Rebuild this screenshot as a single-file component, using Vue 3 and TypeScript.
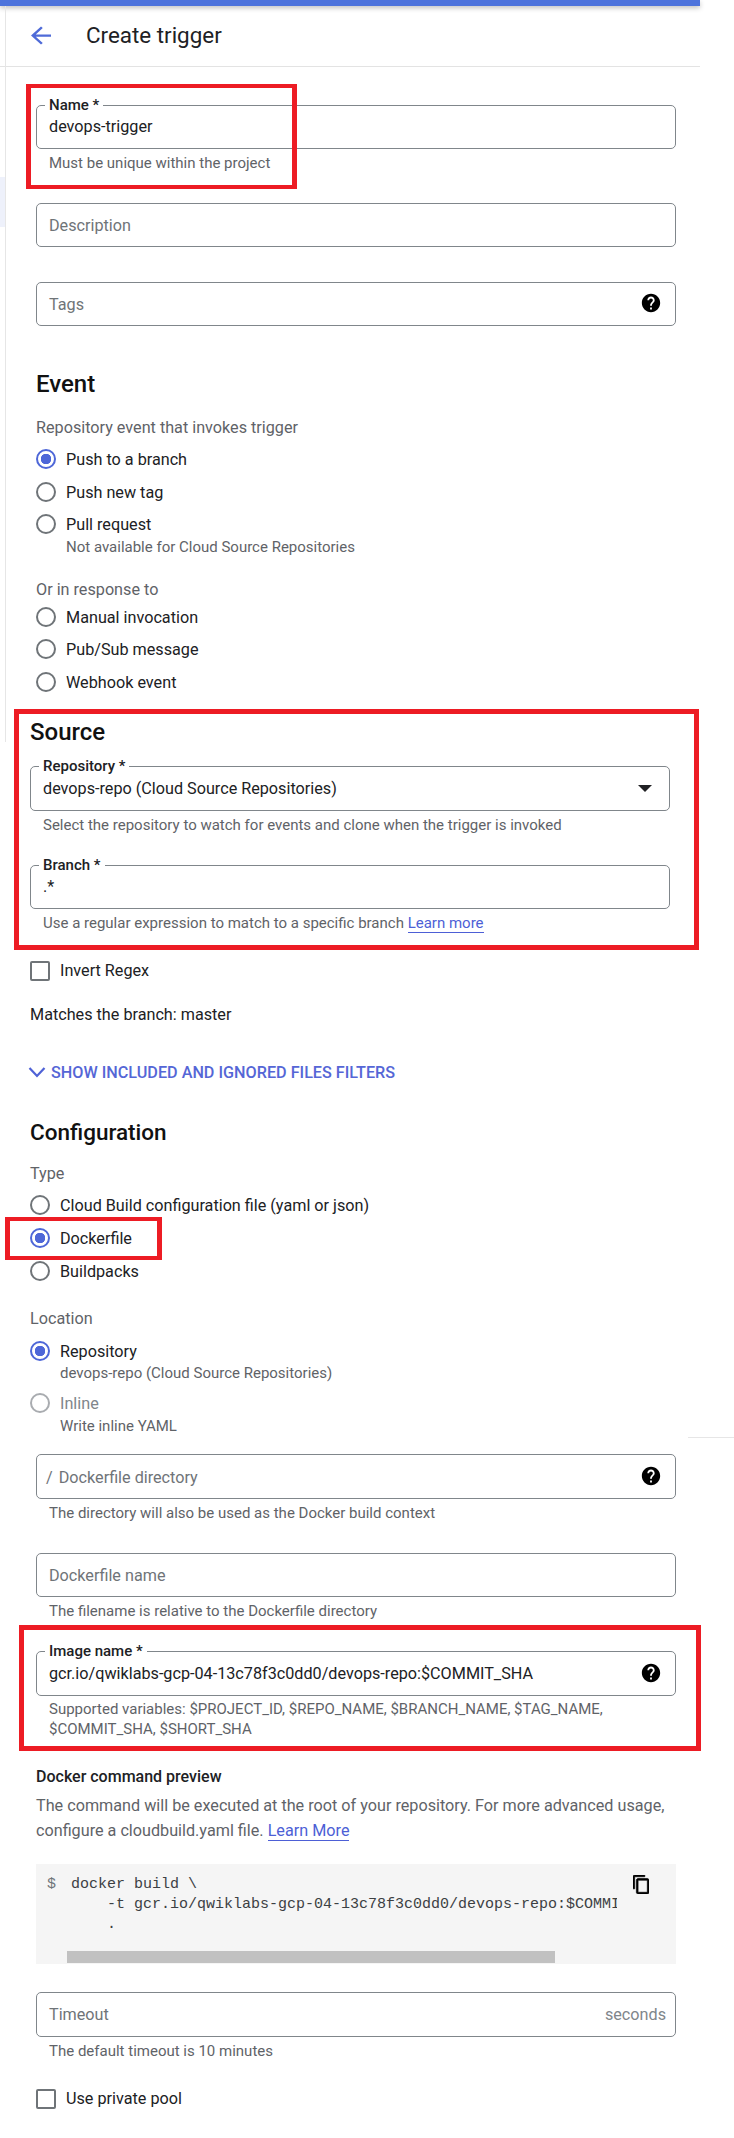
<script setup lang="ts">
const helpPath = 'M12 2C6.48 2 2 6.48 2 12s4.48 10 10 10 10-4.48 10-10S17.52 2 12 2zm1 17h-2v-2h2v2zm2.07-7.75l-.9.92C13.45 12.9 13 13.5 13 15h-2v-.5c0-1.1.45-2.1 1.17-2.83l1.24-1.26c.37-.36.59-.86.59-1.41 0-1.1-.9-2-2-2s-2 .9-2 2H8c0-2.21 1.79-4 4-4s4 1.79 4 4c0 .88-.36 1.68-.93 2.25z'
</script>

<template>
  <div class="root">
    <div class="topbar"></div>
    <div class="rail"></div>
    <div class="rail-tint"></div>
    <div class="stray-line"></div>

    <header class="header">
      <svg class="back" viewBox="0 0 24 24" width="30" height="27" preserveAspectRatio="none"><path fill="#4f6bd8" d="M20 11H7.83l5.59-5.59L12 4l-8 8 8 8 1.41-1.41L7.83 13H20v-2z"/></svg>
      <h1>Create trigger</h1>
    </header>

    <form class="form" @submit.prevent>
      <div class="field m38">
        <span class="legend">Name *</span>
        <span class="value">devops-trigger</span>
      </div>
      <p class="helper">Must be unique within the project</p>

      <div class="field m30"><span class="placeholder">Description</span></div>
      <div class="field m35">
        <span class="placeholder">Tags</span>
        <svg class="help" viewBox="0 0 24 24"><path :d="helpPath"/></svg>
      </div>

      <h2 class="m43">Event</h2>
      <p class="group-label m18">Repository event that invokes trigger</p>
      <div class="option m10"><span class="radio on"></span>Push to a branch</div>
      <div class="option m9"><span class="radio"></span>Push new tag</div>
      <div class="option m8"><span class="radio"></span>Pull request</div>
      <p class="sub m1">Not available for Cloud Source Repositories</p>
      <p class="group-label m22">Or in response to</p>
      <div class="option m6"><span class="radio"></span>Manual invocation</div>
      <div class="option m8"><span class="radio"></span>Pub/Sub message</div>
      <div class="option m9"><span class="radio"></span>Webhook event</div>

      <div class="shifted">
        <h2 class="m23">Source</h2>
        <div class="field tall m19">
          <span class="legend">Repository *</span>
          <span class="value">devops-repo (Cloud Source Repositories)</span>
          <span class="caret"></span>
        </div>
        <p class="helper">Select the repository to watch for events and clone when the trigger is invoked</p>
        <div class="field m30">
          <span class="legend">Branch *</span>
          <span class="value">.*</span>
        </div>
        <p class="helper">Use a regular expression to match to a specific branch <a class="link">Learn more</a></p>

        <div class="option m26"><span class="check"></span>Invert Regex</div>
        <p class="plain m22">Matches the branch: master</p>
        <div class="toggle m35">
          <svg viewBox="0 0 18 12" width="18" height="12"><path d="M1.5 2 9 10l7.5-8" fill="none" stroke="#4f62d6" stroke-width="2.2"/></svg>
          SHOW INCLUDED AND IGNORED FILES FILTERS
        </div>

        <h2 class="config m33">Configuration</h2>
        <p class="group-label m16">Type</p>
        <div class="option m10"><span class="radio"></span>Cloud Build configuration file (yaml or json)</div>
        <div class="option m9"><span class="radio on"></span>Dockerfile</div>
        <div class="option m9"><span class="radio"></span>Buildpacks</div>
        <p class="group-label m25">Location</p>
        <div class="option m11"><span class="radio on"></span>Repository</div>
        <p class="sub">devops-repo (Cloud Source Repositories)</p>
        <div class="option disabled m8"><span class="radio"></span>Inline</div>
        <p class="sub m1">Write inline YAML</p>
      </div>

      <div class="field tall m18">
        <span class="placeholder"><span class="slash">/</span>Dockerfile directory</span>
        <svg class="help" viewBox="0 0 24 24"><path :d="helpPath"/></svg>
      </div>
      <p class="helper">The directory will also be used as the Docker build context</p>
      <div class="field m30"><span class="placeholder">Dockerfile name</span></div>
      <p class="helper">The filename is relative to the Dockerfile directory</p>
      <div class="field tall m30">
        <span class="legend">Image name *</span>
        <span class="value">gcr.io/qwiklabs-gcp-04-13c78f3c0dd0/devops-repo:$COMMIT_SHA</span>
        <svg class="help" viewBox="0 0 24 24"><path :d="helpPath"/></svg>
      </div>
      <p class="helper tight">Supported variables: $PROJECT_ID, $REPO_NAME, $BRANCH_NAME, $TAG_NAME,<br>$COMMIT_SHA, $SHORT_SHA</p>

      <h3 class="m28">Docker command preview</h3>
      <p class="para">The command will be executed at the root of your repository. For more advanced usage, configure a cloudbuild.yaml file. <a class="link">Learn More</a></p>

      <div class="code">
        <span class="prompt">$</span>
        <pre class="cmd">docker build \
    -t gcr.io/qwiklabs-gcp-04-13c78f3c0dd0/devops-repo:$COMMIT_SHA
    .</pre>
        <svg class="copy" viewBox="2 1 19 22" width="16" height="19" preserveAspectRatio="none"><path stroke="#000" stroke-width="0.8" d="M16 1H4c-1.1 0-2 .9-2 2v14h2V3h12V1zm3 4H8c-1.1 0-2 .9-2 2v14c0 1.1.9 2 2 2h11c1.1 0 2-.9 2-2V7c0-1.1-.9-2-2-2zm0 16H8V7h11v14z"/></svg>
        <div class="scrollbar"></div>
      </div>

      <div class="field tall m28">
        <span class="placeholder timeout">Timeout</span>
        <span class="suffix">seconds</span>
      </div>
      <p class="helper">The default timeout is 10 minutes</p>
      <div class="option m26"><span class="check"></span>Use private pool</div>
    </form>

    <div class="mark mark-name"></div>
    <div class="mark mark-source"></div>
    <div class="mark mark-docker"></div>
    <div class="mark mark-image"></div>
  </div>
</template>

<style>
html, body { margin: 0; background: #fff; }
</style>

<style scoped>
* { box-sizing: border-box; }
.root {
  position: relative;
  width: 734px;
  height: 2138px;
  overflow: hidden;
  background: #fff;
  color: #202124;
  font-family: Roboto, "Liberation Sans", sans-serif;
  font-size: 16.2px;
}
.topbar {
  height: 6px;
  width: 700px;
  background: #4d73dc;
  box-shadow: 0 2px 5px rgba(0, 0, 0, 0.25);
}
.rail { position: absolute; left: 5px; top: 6px; width: 1px; height: 736px; background: #e6e6e6; }
.rail-tint { position: absolute; left: 0; top: 177px; width: 5px; height: 50px; background: #eef1fb; }
.stray-line { position: absolute; left: 688px; top: 1437px; width: 46px; height: 1px; background: #e6e6e6; }
.header {
  display: flex;
  align-items: center;
  width: 700px;
  height: 61px;
  border-bottom: 1px solid #e3e3e3;
  padding-bottom: 2px;
}
.back { margin-left: 26px; }
h1 { margin: 0 0 0 30px; font-size: 22.4px; font-weight: 400; line-height: 30px; color: #202124; }
.form { padding-left: 36px; width: 676px; }
.shifted { margin-left: -6px; }
h2 { margin-bottom: 0; font-size: 24px; font-weight: 500; line-height: 30px; color: #111; }
h2.config { font-size: 22.5px; }
h3 { margin-bottom: 0; font-size: 16px; font-weight: 500; line-height: 20px; color: #202124; }
p { margin: 0; }
.field {
  position: relative;
  display: flex;
  align-items: center;
  width: 640px;
  height: 44px;
  padding: 0 12px;
  border: 1px solid #80868b;
  border-radius: 5px;
  background: #fff;
}
.field.tall { height: 45px; }
.legend {
  position: absolute;
  left: 8px;
  top: -9px;
  padding: 0 4px;
  background: #fff;
  font-size: 15px;
  font-weight: 500;
  line-height: 16px;
}
.value { line-height: 20px; }
.placeholder { padding-top: 2px; color: #6f7478; line-height: 20px; }
.placeholder.timeout { padding-top: 0; }
.slash { margin-right: 6px; margin-left: -3px; }
.help { position: absolute; right: 13px; top: 50%; width: 22px; height: 22px; margin-top: -12px; fill: #000; }
.caret {
  position: absolute;
  right: 17px;
  top: 18px;
  border-left: 7px solid transparent;
  border-right: 7px solid transparent;
  border-top: 7px solid #202124;
}
.suffix { position: absolute; right: 9px; color: #80868b; line-height: 20px; }
.helper { margin-top: 4px; padding-left: 13px; font-size: 15px; line-height: 20px; color: #5f6368; }
.helper.tight { margin-top: 3px; }
.group-label { margin-bottom: -2px; font-size: 16.2px; line-height: 22px; color: #5f6368; }
.plain { line-height: 20px; }
.sub { padding-left: 30px; font-size: 15px; line-height: 20px; color: #5f6368; }
.option { display: flex; align-items: center; height: 24px; line-height: 24px; }
.option:has(.radio) { padding-top: 2px; line-height: 22px; }
.option.disabled { color: #80868b; }
.radio {
  flex: none;
  width: 20px;
  height: 20px;
  margin-top: -2px;
  margin-right: 10px;
  border: 2px solid #6f7478;
  border-radius: 50%;
}
.radio.on {
  border-color: #4e67d8;
  background: radial-gradient(circle, #4e67d8 0 5px, #fff 5.5px);
}
.disabled .radio { border-color: #a9acb0; }
.check {
  flex: none;
  width: 20px;
  height: 20px;
  margin-right: 10px;
  border: 2px solid #6f7478;
  border-radius: 2px;
}
.link { color: #4d5fd6; border-bottom: 1px solid #4d5fd6; }
.toggle {
  display: flex;
  align-items: center;
  gap: 5px;
  height: 24px;
  margin-left: -2px;
  color: #5566d6;
  font-size: 16.2px;
  font-weight: 500;
}
.para { margin-top: 6px; width: 640px; line-height: 25px; color: #5f6368; }
.code {
  position: relative;
  width: 640px;
  height: 100px;
  margin-top: 21px;
  background: #f5f5f5;
  font-family: "Liberation Mono", monospace;
  font-size: 15px;
  line-height: 20px;
  color: #3c4043;
}
.prompt { position: absolute; left: 11px; top: 11px; color: #6f7478; }
.cmd {
  position: absolute;
  left: 35px;
  top: 11px;
  width: 546px;
  height: 62px;
  margin: 0;
  overflow: hidden;
  font: inherit;
}
.copy { position: absolute; left: 597px; top: 11px; }
.scrollbar {
  position: absolute;
  left: 31px;
  top: 87px;
  width: 488px;
  height: 12px;
  background: #c1c1c1;
}
.mark { position: absolute; border: solid #ed1c24; pointer-events: none; }
.mark-name { left: 26px; top: 84px; width: 271px; height: 105px; border-width: 4px 5px; }
.mark-source { left: 14px; top: 709px; width: 685px; height: 241px; border-width: 5px; }
.mark-docker { left: 5px; top: 1217px; width: 157px; height: 43px; border-width: 4px 5px; }
.mark-image { left: 19px; top: 1625px; width: 682px; height: 126px; border-width: 5px; }
.m1 { margin-top: 1px; }
.m6 { margin-top: 6px; }
.m8 { margin-top: 8px; }
.m9 { margin-top: 9px; }
.m10 { margin-top: 10px; }
.m11 { margin-top: 11px; }
.m16 { margin-top: 16px; }
.m18 { margin-top: 18px; }
.m19 { margin-top: 19px; }
.m22 { margin-top: 22px; }
.m23 { margin-top: 23px; }
.m25 { margin-top: 25px; }
.m26 { margin-top: 26px; }
.m28 { margin-top: 28px; }
.m30 { margin-top: 30px; }
.m33 { margin-top: 33px; }
.m35 { margin-top: 35px; }
.m38 { margin-top: 38px; }
.m43 { margin-top: 43px; }
</style>
